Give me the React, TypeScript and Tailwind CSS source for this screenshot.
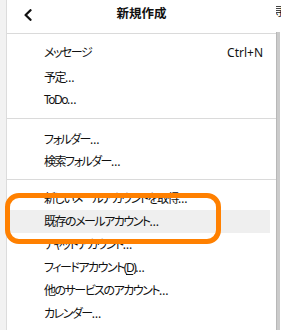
import React from 'react';

type Item = { label: React.ReactNode; shortcut?: string; hover?: boolean };

const groupOne: Item[] = [
  { label: 'メッセージ', shortcut: 'Ctrl+N' },
  { label: '予定…' },
  { label: 'ToDo…' },
];

const groupTwo: Item[] = [{ label: 'フォルダー…' }, { label: '検索フォルダー…' }];

const groupThree: Item[] = [
  { label: '新しいメールアカウントを取得…' },
  { label: '既存のメールアカウント…', hover: true },
  { label: 'チャットアカウント…' },
  {
    label: (
      <>
        フィードアカウント(<span className="underline underline-offset-2">D</span>)…
      </>
    ),
  },
  { label: '他のサービスのアカウント…' },
  { label: 'カレンダー…' },
];

const font = "font-['Noto_Sans','Noto_Sans_CJK_JP',sans-serif] [font-feature-settings:'palt']";

const MenuRow: React.FC<{ item: Item; height: string; extra?: string }> = ({ item, height, extra = '' }) => (
  <div
    className={`flex items-center justify-between pl-[37px] pr-[7px] mr-[6px] ${height} ${extra} ${
      item.hover ? 'bg-[#efefef]' : ''
    }`}
  >
    <span className="tracking-[-1.5px]">{item.label}</span>
    {item.shortcut && <span>{item.shortcut}</span>}
  </div>
);

export default function App() {
  return (
    <div className={`relative flex w-[281px] h-[330px] overflow-hidden bg-white text-[12px] leading-none text-[#111] ${font}`}>
      {/* app window behind the menu */}
      <div className="w-[7px] h-full bg-[#f2f2f2] border-r border-[#dcdcdc]" />

      <div className="flex flex-col w-[269px] h-full bg-white">
        <div className="relative flex items-center justify-center h-[34px] pb-[5px] border-b border-[#dadada]">
          <svg
            className="absolute left-[17px] top-[9px]"
            width="8"
            height="12"
            viewBox="0 0 8 12"
            fill="none"
            stroke="#111"
            strokeWidth="2.3"
            strokeLinecap="round"
            strokeLinejoin="round"
          >
            <polyline points="6.5,1.2 1.6,6 6.5,10.8" />
          </svg>
          <span className="font-bold text-[12.5px]">新規作成</span>
        </div>

        <div className="pt-[8px] pb-[7px] border-b border-[#dadada]">
          <MenuRow item={groupOne[0]} height="h-[22px]" />
          <MenuRow item={groupOne[1]} height="h-[22px]" extra="mt-[3px]" />
          <MenuRow item={groupOne[2]} height="h-[22px]" />
        </div>

        <div className="pt-[10px] pb-[6px] border-b border-[#dadada]">
          {groupTwo.map((item, i) => (
            <MenuRow key={i} item={item} height="h-[22px]" />
          ))}
        </div>

        <div className="pt-[7px]">
          {groupThree.map((item, i) => (
            <MenuRow key={i} item={item} height="h-[23px]" />
          ))}
        </div>
      </div>

      <div className="flex flex-col w-[5px] h-full">
        <div className="h-[32px] bg-white overflow-hidden">
          <span className="block -ml-[3px] mt-[6px] text-[11px]">寻</span>
        </div>
        <div className="flex-1 flex">
          <div className="w-[4px] bg-[#cbcbcb] border-l border-[#b8b8b8]" />
          <div className="w-[1px] bg-white" />
        </div>
      </div>

      {/* orange annotation box */}
      <div className="absolute left-[5px] top-[193px] w-[216px] h-[51px] rounded-[14px] border-[5px] border-[#ff8000]" />
    </div>
  );
}
